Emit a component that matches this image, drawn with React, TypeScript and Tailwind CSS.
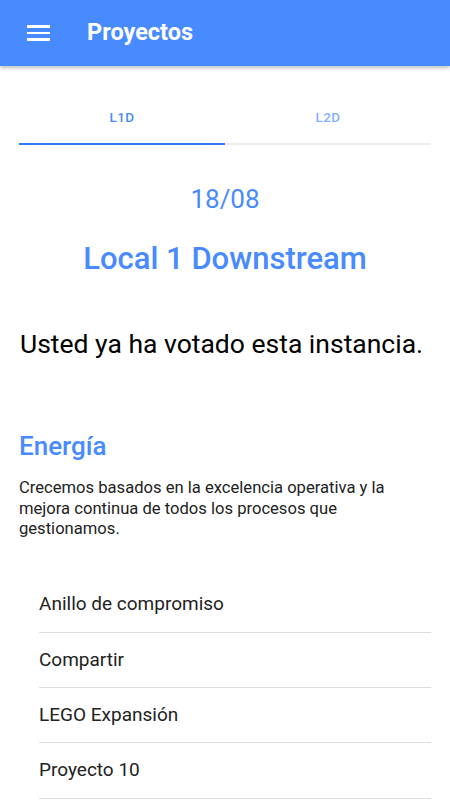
import { useState } from 'react'

const projects = ['Anillo de compromiso', 'Compartir', 'LEGO Expansión', 'Proyecto 10']

const App = () => {
  const [tab, setTab] = useState('L1D')

  return (
    <div className="min-h-screen bg-white font-['Roboto',sans-serif] text-black">
      <header className="relative z-10 flex items-center h-[66px] bg-[#488aff] shadow-[0_2px_4px_rgba(0,0,0,0.25)]">
        <button className="ml-[27px] flex flex-col gap-[4px] w-[23px]">
          <span className="block h-[2.5px] w-full bg-white" />
          <span className="block h-[2.5px] w-full bg-white" />
          <span className="block h-[2.5px] w-full bg-white" />
        </button>
        <h1 className="ml-[37px] text-[23.5px] font-bold text-white">Proyectos</h1>
      </header>

      <div className="px-[19px] pt-[26px]">
        <div className="flex">
          {['L1D', 'L2D'].map((t) => (
            <button
              key={t}
              onClick={() => setTab(t)}
              className={`flex-1 h-[53px] text-[13.5px] font-medium tracking-wide border-b-2 ${
                tab === t ? 'text-[#488aff] border-[#2f7bf5]' : 'text-[#488aff]/70 border-[#ececec]'
              }`}
            >
              {t}
            </button>
          ))}
        </div>

        <p className="mt-[39px] text-center text-[26px] text-[#488aff] leading-[30px]">18/08</p>
        <h2 className="mt-[27px] text-center text-[31px] font-medium text-[#488aff] leading-[36px]">
          Local 1 Downstream
        </h2>

        <p className="mt-[52px] pl-px text-[26.5px] leading-[30px]">Usted ya ha votado esta instancia.</p>

        <h3 className="mt-[72px] text-[26px] font-medium text-[#488aff] leading-[30px]">Energía</h3>
        <p className="mt-[17px] text-[16.6px] leading-[20.5px] text-[#222]">
          Crecemos basados en la excelencia operativa y la mejora continua de todos los procesos que gestionamos.
        </p>

        <ul className="mt-[38px] pl-[20px]">
          {projects.map((p) => (
            <li key={p} className="flex items-center h-[55.3px] border-b border-[#dedede] text-[19px] text-[#222]">
              {p}
            </li>
          ))}
        </ul>
      </div>
    </div>
  )
}

export default App
